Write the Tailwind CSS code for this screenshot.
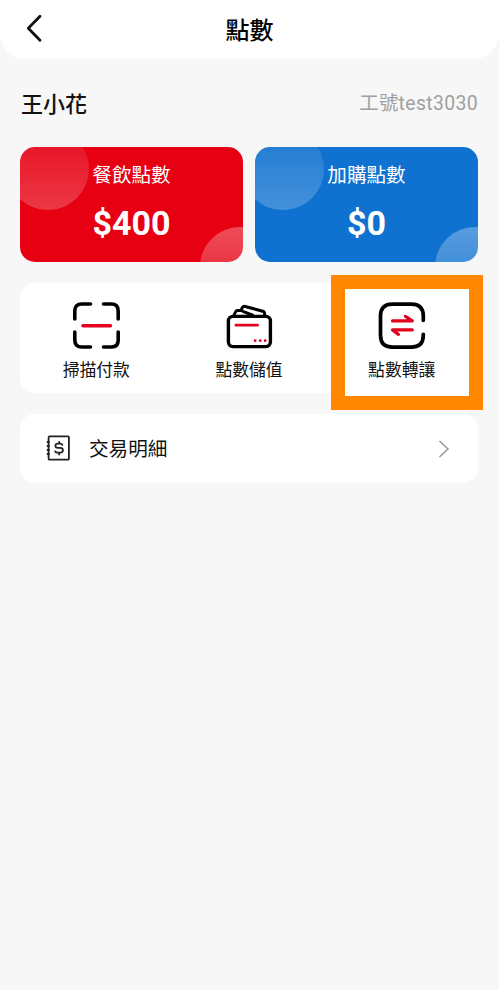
<!DOCTYPE html>
<html lang="zh-Hant">
<head>
<meta charset="utf-8">
<meta name="viewport" content="width=device-width, initial-scale=1">
<title>點數</title>
<script src="https://cdn.jsdelivr.net/npm/@tailwindcss/browser@4"></script>
</head>
<body class="bg-white font-[Roboto,'Noto_Sans_CJK_TC',sans-serif]">
<div class="flex h-[990px] w-[499px] flex-col bg-[#f7f7f7] text-[#111]">
  <header class="grid h-[59px] shrink-0 grid-cols-[1fr_auto_1fr] items-center rounded-b-[26px] bg-white">
    <svg class="mb-[3px] ml-[24px] h-[30px] w-[20px]" viewBox="0 0 20 30" fill="none" stroke="#111" stroke-width="2.8" stroke-linecap="round" stroke-linejoin="round"><path d="M16 3.3 4.3 15.3 16 27.3"/></svg>
    <h1 class="pt-[3px] text-2xl leading-[56px] font-medium text-black">點數</h1>
    <span></span>
  </header>
  <div class="mt-[30px] flex h-[32px] items-center justify-between pr-[21px] pl-[21px]">
    <span class="text-[22px] leading-8 font-medium">王小花</span>
    <span class="pb-[2px] text-[19.4px] leading-7 tracking-[0.35px] text-[#a0a0a0]">工號test3030</span>
  </div>
  <section class="mr-[21px] ml-5 mt-[26px] grid h-[115px] shrink-0 grid-cols-2 gap-3 text-white">
    <div class="relative flex flex-col items-center overflow-hidden rounded-[15px] bg-[#e60012]">
      <i class="absolute top-[-19px] left-[-13px] size-[82px] rounded-full bg-linear-to-b from-white/5 to-white/22"></i>
      <i class="absolute top-[80px] left-[180px] size-[80px] rounded-full bg-linear-to-b from-white/30 to-white/10"></i>
      <span class="mt-[15px] text-[19.6px] leading-7">餐飲點數</span>
      <strong class="mt-[13px] text-[34px] leading-10 font-bold">$400</strong>
    </div>
    <div class="relative flex flex-col items-center overflow-hidden rounded-[15px] bg-[#1072d0]">
      <i class="absolute top-[-19px] left-[-13px] size-[82px] rounded-full bg-linear-to-b from-white/5 to-white/22"></i>
      <i class="absolute top-[80px] left-[180px] size-[80px] rounded-full bg-linear-to-b from-white/30 to-white/10"></i>
      <span class="mt-[15px] text-[19.6px] leading-7">加購點數</span>
      <strong class="mt-[13px] text-[34px] leading-10 font-bold">$0</strong>
    </div>
  </section>
  <section class="relative mr-[21px] ml-5 mt-[21px] grid h-[110px] shrink-0 grid-cols-3 rounded-[15px] bg-white text-[16.8px] leading-6">
    <div class="absolute top-[-8px] left-[311.4px] h-[134.5px] w-[152px] border-[14px] border-[#ff8800] bg-white"></div>
    <div class="flex flex-col items-center pt-[19px]">
      <svg class="size-12" viewBox="0 0 48 48" fill="none" stroke="#000" stroke-width="3.6" stroke-linecap="round"><path d="M2.8 17V9Q2.8 2 9.8 2H18.5M31.5 2H39.5Q46.2 2 46.2 9V17M46.2 30V38Q46.2 45 39.5 45H31.5M18.5 45H9.8Q2.8 45 2.8 38V30"/><path stroke="#e60020" stroke-width="3.4" d="M11 23.8H38.5"/></svg>
      <span class="mt-[8px]">掃描付款</span>
    </div>
    <div class="flex flex-col items-center pt-[19px]">
      <svg class="size-12" viewBox="0 0 48 48" fill="none" stroke="#000" stroke-width="3.4" stroke-linejoin="round"><rect x="3.4" y="14.4" width="42" height="30.2" rx="4.5"/><path d="M8.8 13.5 10.4 10Q11 8.5 13 8.5H17.5M28.5 13.5 18.4 9.6Q16 8.7 16.8 6.6L17.3 5.6Q18.2 3.9 20.3 4.5L37.7 9.2Q39.7 9.9 39.6 11.8V14" stroke-width="3"/><path stroke="#e60020" stroke-width="2.8" stroke-linecap="round" d="M11 23.2H32.5"/><g fill="#e60020" stroke="none"><circle cx="30.2" cy="38.7" r="1.4"/><circle cx="35.2" cy="38.7" r="1.4"/><circle cx="40.2" cy="38.7" r="1.4"/></g></svg>
      <span class="mt-[8px]">點數儲值</span>
    </div>
    <div class="relative flex flex-col items-center pt-[19px]">
      <svg class="size-12" viewBox="0 0 48 48" fill="none" stroke="#000" stroke-width="3.7" stroke-linecap="round" stroke-linejoin="round"><path d="M45.3 18.3V14Q45.3 2.2 33.5 2.2H14.3Q2.5 2.2 2.5 14V33.3Q2.5 45.1 14.3 45.1H33.5Q45.3 45.1 45.3 33.3V32.3"/><path stroke="#e1001e" stroke-width="3.1" d="M14.5 18.9H34.3L27.3 14.3M34.3 27.9H14.5L20.5 32.4"/></svg>
      <span class="mt-[8px]">點數轉讓</span>
    </div>
  </section>
  <section class="mr-[21px] ml-5 mt-[21px] flex h-[69px] shrink-0 items-center rounded-[15px] bg-white pr-[28px] pl-[25px]">
    <svg class="mb-[2px] h-[28px] w-[26px]" viewBox="0 0 26 28" fill="none" stroke="#222" stroke-width="1.8" stroke-linecap="round" stroke-linejoin="round"><rect x="3.6" y="2.3" width="20.3" height="23.4" rx="1"/><path d="M2.5 8H4M2.5 12H4M2.5 16H4M2.5 20H4M17.4 10.9Q16.9 9.6 15.2 9.6H12.9Q10.4 9.6 10.4 11.7T12.9 13.9H15.2Q17.9 13.9 17.9 16.3T15.2 18.7H12.5Q10.7 18.7 10.2 17.4M14.1 7.8V9.6M14.1 18.7V20.5"/></svg>
    <span class="ml-[18px] flex-1 pt-[3px] text-[19.6px] leading-7">交易明細</span>
    <svg class="h-[20px] w-[12px]" viewBox="0 0 12 20" fill="none" stroke="#999" stroke-width="1.5"><path d="M1.5 2 10 10 1.5 18"/></svg>
  </section>
</div>
</body>
</html>
